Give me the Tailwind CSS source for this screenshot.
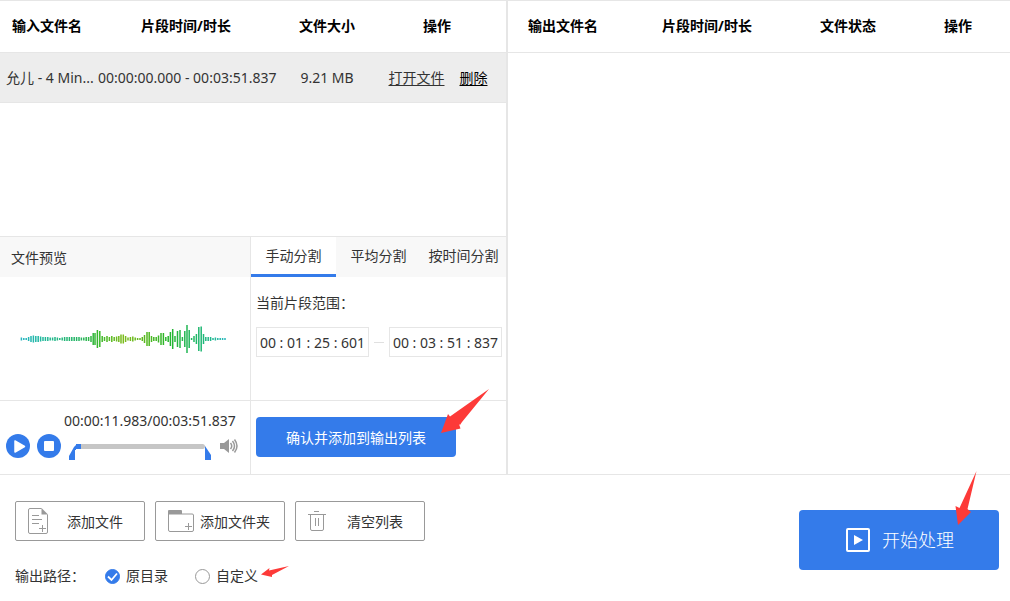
<!DOCTYPE html>
<html lang="zh-CN">
<head>
<meta charset="utf-8">
<meta name="viewport" content="width=device-width, initial-scale=1">
<title>音频分割</title>
<script src="https://cdn.jsdelivr.net/npm/@tailwindcss/browser@4"></script>
</head>
<body class="flex min-h-screen flex-col bg-white font-['Noto_Sans','Noto_Sans_CJK_SC',sans-serif] text-sm leading-5 text-[#333]">
<main class="grid flex-1 grid-cols-[508fr_502fr] border-y border-[#e6e6e6]">
  <section class="flex min-w-0 flex-col border-r-2 border-[#e6e6e6]">
    <div class="flex-1">
      <table class="w-full table-fixed border-collapse whitespace-nowrap">
        <thead>
          <tr class="h-[51px] border-b border-[#e6e6e6] text-black">
            <th class="w-[98px] pl-3 text-left">输入文件名</th>
            <th class="w-[178px] pr-0.5">片段时间/时长</th>
            <th class="w-[102px]">文件大小</th>
            <th class="pr-2.5">操作</th>
          </tr>
        </thead>
        <tbody>
          <tr class="h-[50px] border-b border-[#e6e6e6] bg-[#ededed]">
            <td class="pt-0.5 pl-1.5">允儿 - 4 Min...</td>
            <td class="pt-0.5 text-center">00:00:00.000 - 00:03:51.837</td>
            <td class="pt-0.5 text-center">9.21 MB</td>
            <td class="pt-0.5 pr-2 text-center"><a href="#" class="mr-[15px] underline underline-offset-2">打开文件</a><a href="#" class="text-black underline underline-offset-2">删除</a></td>
          </tr>
        </tbody>
      </table>
    </div>

    <div class="grid grid-cols-[251fr_255fr] border-t border-[#e6e6e6]">
      <div class="border-r border-[#e6e6e6]">
        <h2 class="flex h-10 items-center bg-[#f8f8f8] px-[11px] pt-0.5">文件预览</h2>
        <div class="flex h-[123px] items-center justify-center pr-1">
          <svg class="h-8 w-[206px]" viewBox="20 323 206 32" fill="none" aria-hidden="true">
            <defs>
              <linearGradient id="wave" gradientUnits="userSpaceOnUse" x1="20" y1="0" x2="226" y2="0">
                <stop offset="0" stop-color="#25b5c4"/><stop offset=".12" stop-color="#20b898"/>
                <stop offset=".3" stop-color="#25b45c"/><stop offset=".38" stop-color="#35b82a"/>
                <stop offset=".5" stop-color="#7dbb1c"/><stop offset=".6" stop-color="#5bb81d"/>
                <stop offset=".72" stop-color="#25b52c"/><stop offset=".86" stop-color="#20b76a"/>
                <stop offset=".94" stop-color="#20b795"/><stop offset="1" stop-color="#28b8c0"/>
              </linearGradient>
            </defs>
            <path stroke="url(#wave)" stroke-width="1.5" d="M21.4 337.5v3M23.8 338v2M26.2 338v2M28.6 337v4M31 336v6M33.4 335.5v7M35.8 336v6M38.2 336v6M40.6 336.5v5M43 337v4M45.4 337v4M47.8 337v4M50.2 337.5v3M52.6 337.5v3M55 337v4M57.4 337.5v3M59.8 338v2M62.2 337.5v3M64.6 337v4M67 337v4M69.4 337v4M71.8 337v4M74.2 337v4M76.6 337v4M79 337v4M81.4 337.5v3M83.8 337.5v3M86.2 337v4M88.6 337v4M91 336v6M93.2 333v12M95 333v12M97.4 330v18M99.8 331v16M102.2 336v6M104.5 337v4M107 336v6M109.4 337v4M111.8 336v6M114.2 337v4M116.6 336.5v5M118.8 336v6M121 334.5v9M123.3 334.5v9M125.6 336v6M128 337.5v3M130.4 337v4M132.8 336.5v5M135.2 337.5v3M137.6 338v2M140 338v2M142.3 337v4M144.5 335v8M147 332v14M149.2 332v14M151.5 336v6M153.8 337v4M156.2 337v4M158.5 335.5v7M161 333v12M163.4 333v12M165.8 337v4M168.2 336v6M170.4 332v14M172.7 329v20M175 336v6M177.5 331v16M180 330v18M182.4 337v4M184.8 331v16M187 325v28M189.2 330v18M191.6 338v2M194 336v6M196.4 334v10M198.8 327v24M201.2 326.5v25M203.5 334v10M205.8 337v4M208.2 337v4M210.6 337v4M213 338v2M215.4 337.5v3M217.8 338v2M220.2 338v2M222.6 338v2M225 338v2"/>
          </svg>
        </div>
        <div class="flex h-[74px] items-end gap-[7px] border-t border-[#e6e6e6] pb-[11px] pl-1.5">
          <button aria-label="播放" class="mb-[5px]"><svg class="size-6" viewBox="0 0 24 24"><circle cx="12" cy="12" r="12" fill="#347bea"/><path d="M9 7v11l9.500-5.500Z" fill="#fff" stroke="#fff" stroke-width="1.500" stroke-linejoin="round"/></svg></button>
          <button aria-label="停止" class="mb-[5px]"><svg class="size-6" viewBox="0 0 24 24"><circle cx="12" cy="12" r="12" fill="#347bea"/><rect x="7" y="7" width="10" height="10" rx="1" fill="#fff"/></svg></button>
          <div class="flex flex-col gap-2.5">
            <span class="-ml-1 whitespace-nowrap">00:00:11.983/00:03:51.837</span>
            <div class="flex gap-2">
              <div class="flex h-[22px] w-[144px] items-start">
                <svg class="mt-1 h-4 w-2 shrink-0" viewBox="0 0 8 16" aria-hidden="true"><path d="M1 15V11L6 2L8 0V5H7V15Z" fill="#347bea"/></svg>
                <input type="range" min="0" max="231" value="0" aria-label="播放进度" class="mt-[3px] h-[5px] w-[129px] appearance-none rounded-sm bg-[#c6c6c6] [&::-webkit-slider-thumb]:h-[5px] [&::-webkit-slider-thumb]:w-[5px] [&::-webkit-slider-thumb]:appearance-none [&::-webkit-slider-thumb]:bg-[#347bea]">
                <svg class="mt-1 h-4 w-[7px] shrink-0" viewBox="0 0 7 16" aria-hidden="true"><path d="M0 1L6 10V15H0Z" fill="#347bea"/></svg>
              </div>
              <button aria-label="音量" class="-mt-[3px] h-4"><svg class="h-4 w-[18px]" viewBox="0 0 18 16" fill="none" stroke="#999" stroke-width="1.500"><path d="M0 5H4L9 1V15L4 11H0Z" fill="#999" stroke="none"/><path d="M10.500 5Q13 8 10.500 11M12.500 3Q16.500 8 12.500 13M14.500 1.500Q19.500 8 14.500 14.500"/></svg></button>
            </div>
          </div>
        </div>
      </div>

      <div class="flex flex-col">
        <div class="flex h-10 bg-[#f8f8f8]" role="tablist">
          <button role="tab" aria-selected="true" class="flex-1 border-b-[3px] border-[#347bea] bg-white whitespace-nowrap">手动分割</button>
          <button role="tab" class="flex-1 border-b-[3px] border-transparent whitespace-nowrap">平均分割</button>
          <button role="tab" class="flex-1 border-b-[3px] border-transparent whitespace-nowrap">按时间分割</button>
        </div>
        <div class="h-[123px] pt-4 pr-1 pl-[5px]">
          <p>当前片段范围：</p>
          <div class="mt-[14px] flex items-center justify-between">
            <input aria-label="开始时间" value="00 : 01 : 25 : 601" class="h-[30px] w-[113px] border border-[#e6e6e6] text-center">
            <span class="h-px w-2.5 bg-[#e0e0e0]"></span>
            <input aria-label="结束时间" value="00 : 03 : 51 : 837" class="h-[30px] w-[113px] border border-[#e6e6e6] text-center">
          </div>
        </div>
        <div class="h-[74px] border-t border-[#e6e6e6] px-[5px] pt-4">
          <div class="relative w-[200px]">
            <button class="h-10 w-full rounded bg-[#347bea] pt-px text-white">确认并添加到输出列表</button>
            <svg class="pointer-events-none absolute -top-7 -right-[34px] h-[45px] w-[50px]" viewBox="0 0 50 45" aria-hidden="true"><path d="M49 0L22 33L20 36L19 35L20.500 39.500L1 44L8 25L10 27.500Z" fill="#fd3a38"/></svg>
          </div>
        </div>
      </div>
    </div>
  </section>

  <section class="min-w-0">
    <table class="w-full table-fixed border-collapse whitespace-nowrap">
      <thead>
        <tr class="h-[51px] border-b border-[#e6e6e6] text-black">
          <th class="w-[110px]">输出文件名</th>
          <th class="w-[178px]">片段时间/时长</th>
          <th class="w-[104px]">文件状态</th>
          <th class="pl-1.5">操作</th>
        </tr>
      </thead>
    </table>
  </section>
</main>

<footer class="flex h-[126px] items-start justify-between pr-[11px] pl-[15px]">
  <div class="pt-[26px]">
    <div class="flex gap-2.5">
      <button class="flex h-10 w-[130px] items-center rounded-xs border border-[#999] pl-3">
        <svg class="h-7 w-[22px] shrink-0" viewBox="0 0 22 28" fill="none" stroke="#999"><path d="M13.500 1.500H2Q.5 1.500 .5 3V25Q.5 26.500 2 26.500H18Q19.500 26.500 19.500 25V7.500"/><path d="M13.500 1L20 7.500H13.500Z" fill="#999" stroke="none"/><path d="M4 8.500H11M4 12.500H14M4 16.500H11M11 21.500H18M14.500 18V25"/></svg>
        <span class="flex-1 pt-px pr-1 text-center">添加文件</span>
      </button>
      <button class="flex h-10 w-[130px] items-center rounded-xs border border-[#999] pl-3">
        <svg class="h-6 w-[26px] shrink-0" viewBox="0 0 26 24" fill="none" stroke="#999"><path d="M.5 5V21Q.5 22.500 2 22.500H24Q25.500 22.500 25.500 21V6Q25.500 5 24 5H.5"/><path d="M0 5V2Q0 1 1 1H13Q14 1 14 2V5Z" fill="#999" stroke="none"/><path d="M17 17.500H24M20.500 14V21"/></svg>
        <span class="pt-px pl-1.5">添加文件夹</span>
      </button>
      <button class="flex h-10 w-[130px] items-center rounded-xs border border-[#999] pl-3">
        <svg class="h-[22px] w-[22px] shrink-0" viewBox="0 0 22 22" fill="none" stroke="#999"><path d="M6 1.500H11M0 4.500H18M2.500 4.500V19Q2.500 20.500 4 20.500H14Q15.500 20.500 15.500 19V4.500M7.500 8V16M10.500 8V16"/></svg>
        <span class="flex-1 pt-px pr-1 text-center">清空列表</span>
      </button>
    </div>
    <fieldset class="mt-[25px] flex items-center">
      <legend class="float-left w-[90px]">输出路径：</legend>
      <label class="flex items-center gap-1.5">
        <span class="grid size-[15px]">
          <input type="radio" name="out" checked class="peer col-start-1 row-start-1 size-[15px] appearance-none rounded-full border border-[#999] checked:border-[#347bea] checked:bg-[#347bea]">
          <svg class="pointer-events-none col-start-1 row-start-1 hidden size-[15px] peer-checked:block" viewBox="0 0 15 15" fill="none" stroke="#fff" stroke-width="1.800"><path d="M3 7.500L6.500 11L12 4.500"/></svg>
        </span>原目录</label>
      <span class="relative ml-[27px]">
        <label class="flex items-center gap-1.5"><input type="radio" name="out" class="size-[15px] appearance-none rounded-full border border-[#999]">自定义</label>
        <svg class="pointer-events-none absolute -top-px left-full ml-0.5 h-[14px] w-[30px]" viewBox="0 0 30 14" aria-hidden="true"><path d="M29 1L12 10V12L1 9.500L9.500 3L9 5.500Z" fill="#fd3a38"/></svg>
      </span>
    </fieldset>
  </div>
  <div class="relative mt-[35px]">
    <button class="flex h-[60px] w-[200px] items-center justify-center gap-3 rounded bg-[#347bea] pl-0.5 text-lg font-light text-white">
      <svg class="size-6" viewBox="0 0 24 24"><rect x="1" y="1" width="22" height="22" rx="1" fill="none" stroke="#fff" stroke-width="2"/><path d="M8 7V17L17 12Z" fill="#fff"/></svg>
      <span>开始处理</span>
    </button>
    <svg class="pointer-events-none absolute -top-[39px] right-5 h-[54px] w-[24px]" viewBox="0 0 24 54" aria-hidden="true"><path d="M21.500 0L12.500 38L16 41L3 54L.5 35L4.500 37Z" fill="#fd3a38"/></svg>
  </div>
</footer>
</body>
</html>
